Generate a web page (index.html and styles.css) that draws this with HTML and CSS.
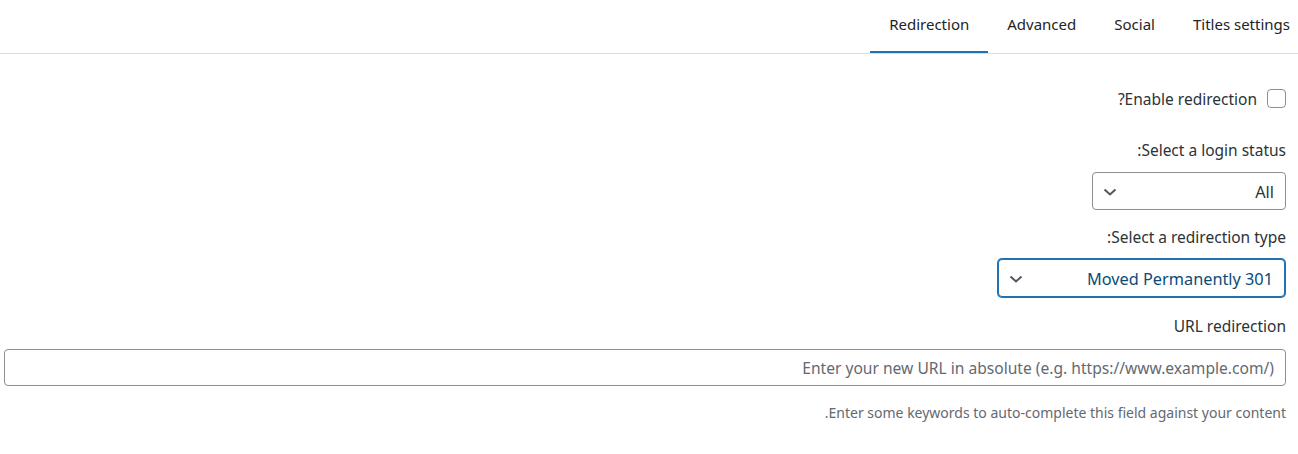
FILE: index.html
```html
<!DOCTYPE html>
<html dir="rtl" lang="en">
<head>
<meta charset="utf-8">
<title>Redirection</title>
<link rel="stylesheet" href="styles.css">
</head>
<body>
<div class="metabox">
  <nav class="tabs">
    <ul class="tab-list">
      <li class="tab">Titles settings</li>
      <li class="tab">Social</li>
      <li class="tab">Advanced</li>
      <li class="tab active">Redirection</li>
    </ul>
  </nav>
  <div class="panel">
    <label class="check-row">
      <input type="checkbox" class="checkbox">
      <span>Enable redirection?</span>
    </label>

    <div class="field">
      <div class="label">Select a login status:</div>
      <div class="select select-status">
        <span class="select-text">All</span>
        <svg class="chevron" width="14" height="8" viewBox="0 0 14 8"><path d="M1.5 1.5 L7 6.5 L12.5 1.5" fill="none" stroke="#50575e" stroke-width="2"/></svg>
      </div>
    </div>

    <div class="field">
      <div class="label">Select a redirection type:</div>
      <div class="select select-type focused">
        <span class="select-text">Moved Permanently 301</span>
        <svg class="chevron" width="14" height="8" viewBox="0 0 14 8"><path d="M1.5 1.5 L7 6.5 L12.5 1.5" fill="none" stroke="#50575e" stroke-width="2"/></svg>
      </div>
    </div>

    <div class="field full">
      <div class="label">URL redirection</div>
      <input class="text-input" type="text" placeholder="Enter your new URL in absolute (e.g. https://www.example.com/)">
      <p class="help">Enter some keywords to auto-complete this field against your content.</p>
    </div>
  </div>
</div>
</body>
</html>
```

FILE: styles.css
```css
html, body {
  margin: 0;
  padding: 0;
  background: #ffffff;
}
body {
  font-family: "Noto Sans", "Open Sans", sans-serif;
  font-size: 15.5px;
  color: #2c3338;
  width: 1298px;
  overflow: hidden;
}
.metabox {
  display: flex;
  flex-direction: column;
}
.tabs {
  border-bottom: 1px solid #dcdcde;
  height: 53px;
  overflow: hidden;
}
.tab-list {
  list-style: none;
  margin: 0 -11px 0 0;
  padding: 0;
  display: flex;
  height: 53px;
}
.tab {
  padding: 0 19px;
  height: 53px;
  box-sizing: border-box;
  display: flex;
  align-items: center;
  padding-bottom: 5px;
  font-size: 15px;
  color: #1d2327;
  white-space: nowrap;
}
.tab.active {
  border-bottom: 2px solid #2271b1;
  padding-bottom: 3px;
}
.panel {
  display: flex;
  flex-direction: column;
  align-items: flex-start;
  padding: 35px 12px 0 4px;
}
.check-row {
  display: flex;
  align-items: center;
  gap: 10px;
  height: 19px;
}
.checkbox {
  appearance: none;
  -webkit-appearance: none;
  margin: 0;
  width: 19px;
  height: 19px;
  border: 1px solid #8c8f94;
  border-radius: 4px;
  background: #fff;
  box-sizing: border-box;
}
.field {
  display: flex;
  flex-direction: column;
  align-items: flex-start;
  margin-top: 32px;
}
.field + .field {
  margin-top: 17px;
}
.field.full {
  align-self: stretch;
  margin-top: 19px;
}
.label {
  line-height: 20px;
  height: 20px;
  margin-bottom: 12px;
}
.select {
  box-sizing: border-box;
  height: 38px;
  border: 1px solid #8c8f94;
  border-radius: 4px;
  display: flex;
  align-items: center;
  justify-content: space-between;
  padding: 1px 11px 0 10px;
  font-size: 16.3px;
  color: #2c3338;
  background: #fff;
}
.select-status {
  width: 194px;
}
.select-type {
  width: 287px;
  margin-right: 1px;
}
.select.focused {
  border-color: #2271b1;
  box-shadow: 0 0 0 1px #2271b1;
  color: #0a4b78;
}
.chevron {
  display: block;
}
.text-input {
  box-sizing: border-box;
  width: 100%;
  height: 37px;
  margin: 1px 0 0;
  border: 1px solid #8c8f94;
  border-radius: 4px;
  padding: 0 11px;
  font-family: inherit;
  font-size: 15.6px;
  color: #1d2327;
  background: #fff;
}
.text-input::placeholder {
  color: #646970;
}
.help {
  margin: 18px 0 0;
  font-size: 14px;
  line-height: 18px;
  color: #646970;
}
```
